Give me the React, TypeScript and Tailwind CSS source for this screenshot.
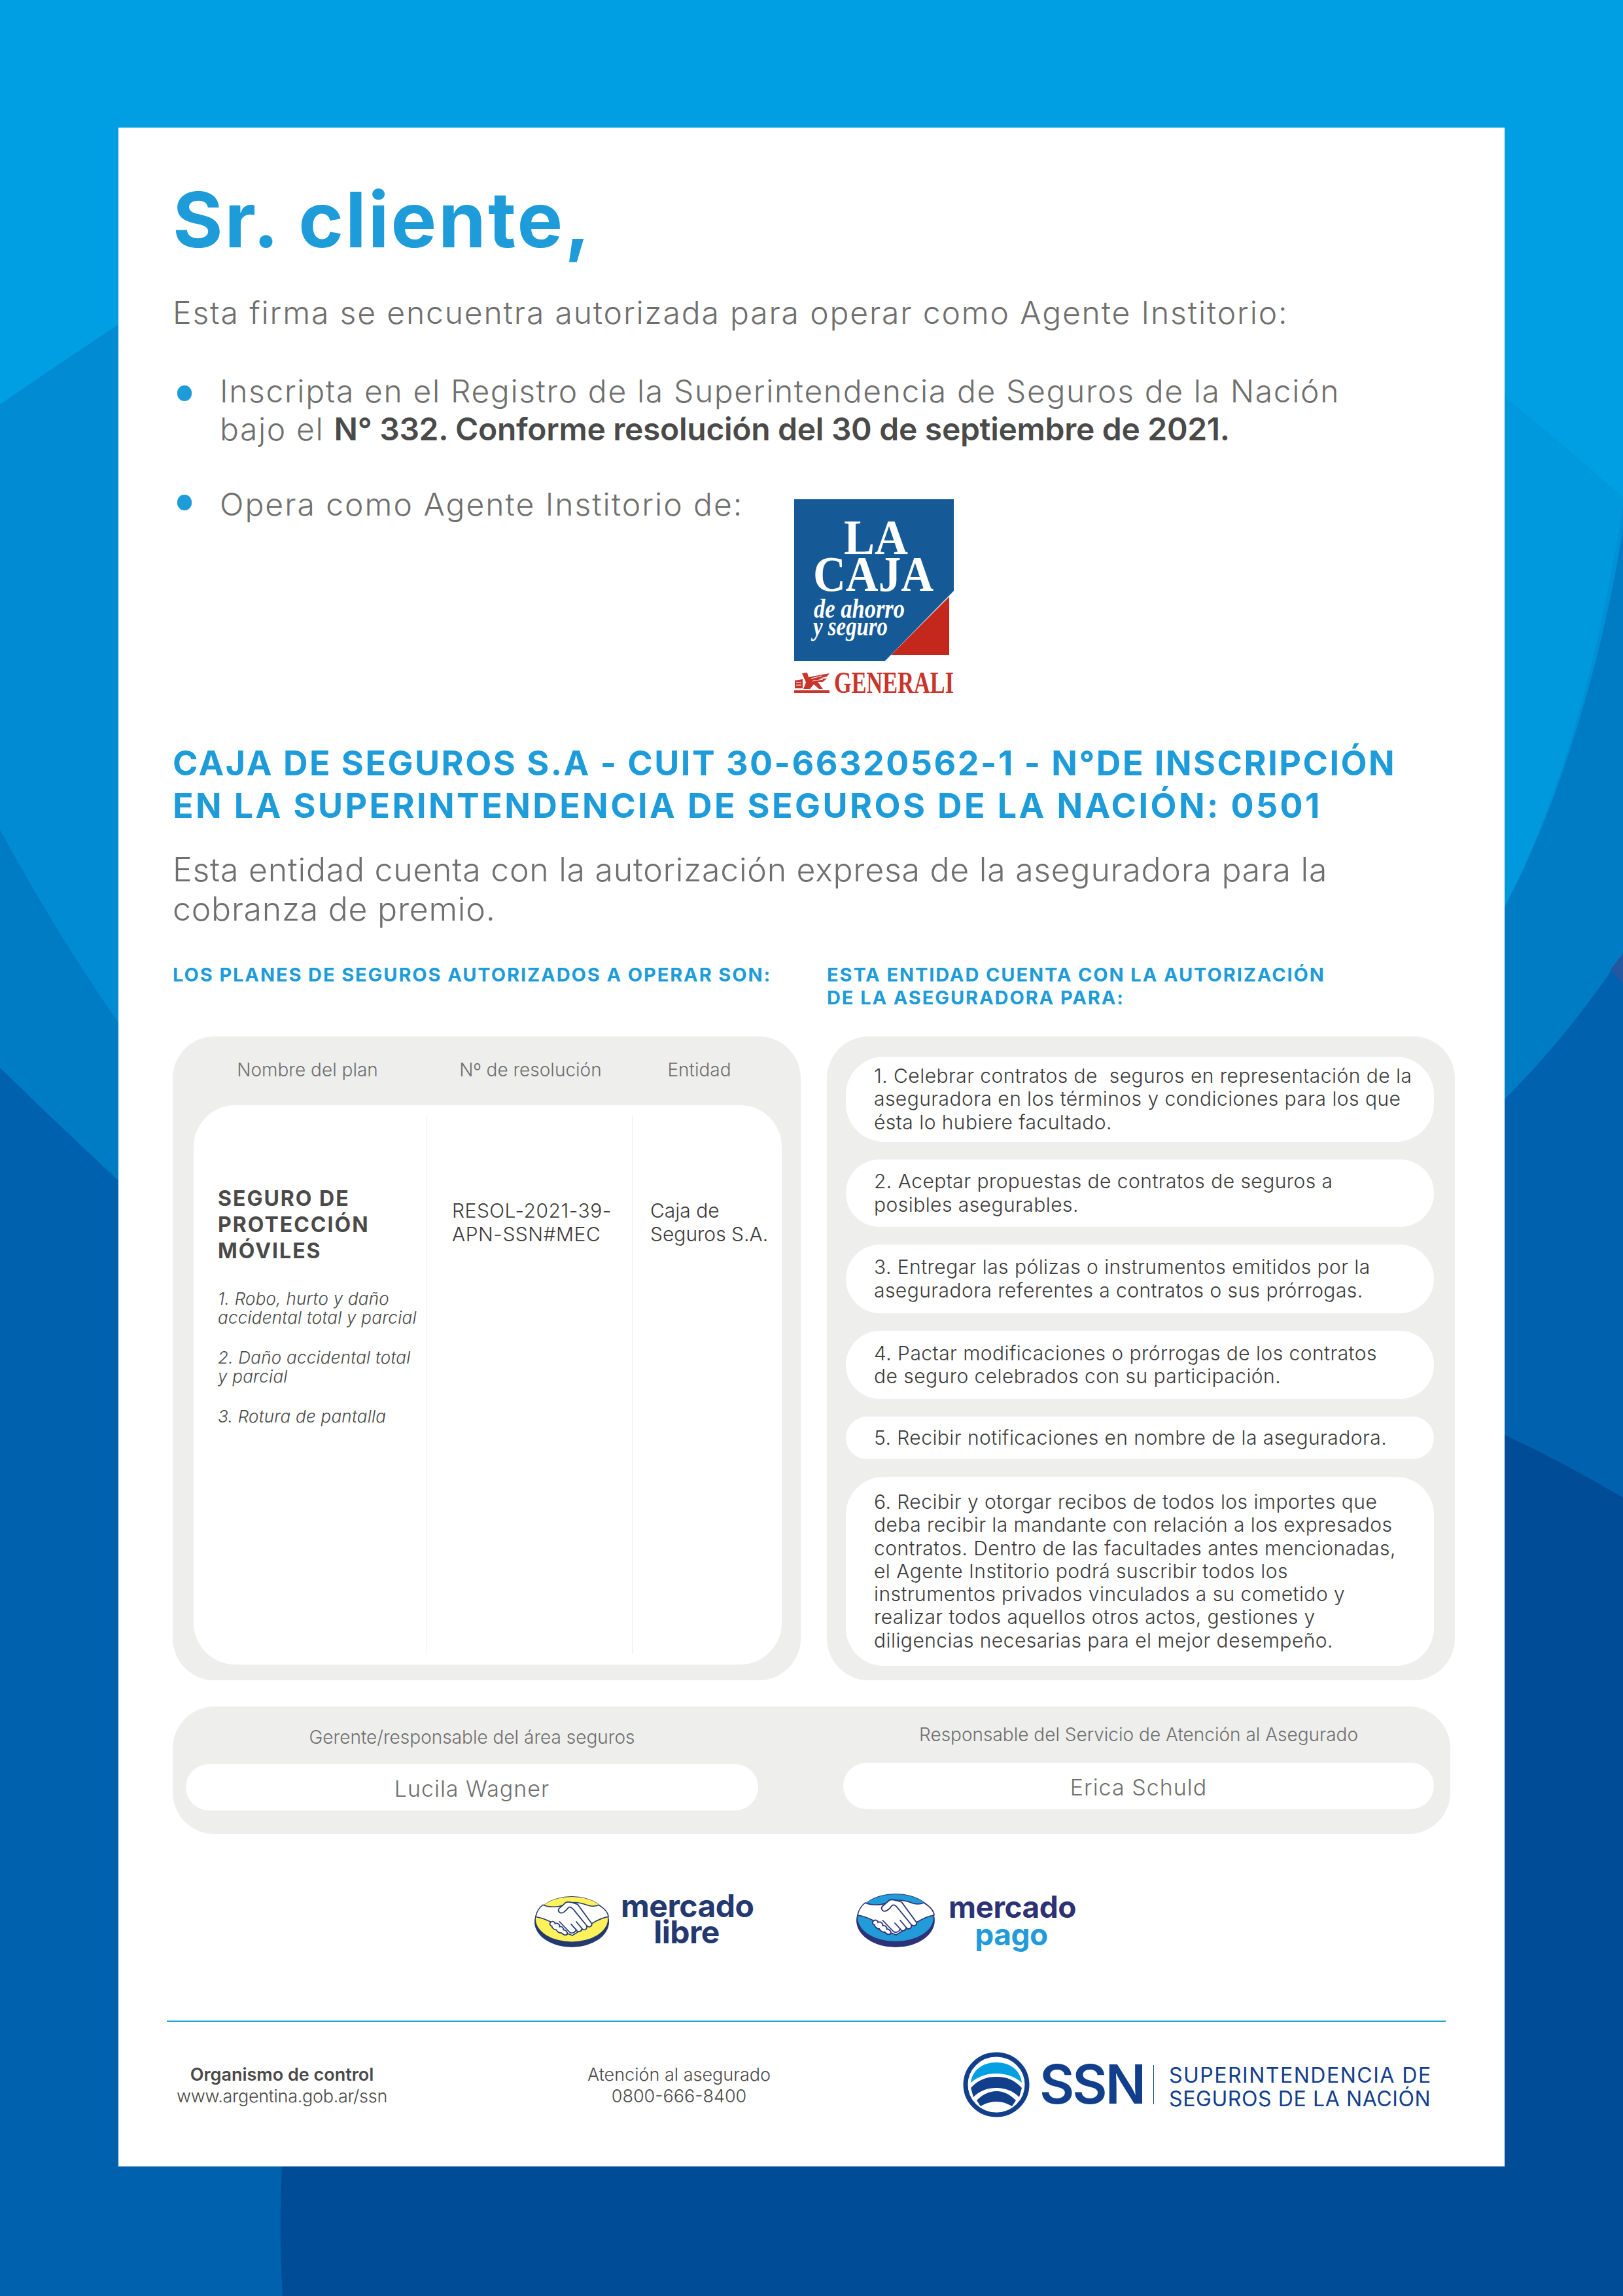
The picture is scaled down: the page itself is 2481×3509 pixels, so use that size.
function Background() {
  return (
    <svg className="absolute inset-0" width="2481" height="3509" viewBox="0 0 2481 3509">
      <rect width="2481" height="3509" fill="#009fe3" />
      {/* left strip */}
      <path d="M0 618 Q90 556 181 496 L181 1620 L0 1620 Z" fill="#008bd3" />
      <path d="M0 1268 Q85 1425 181 1563 L181 1900 L0 1900 Z" fill="#007cc4" />
      {/* right strip */}
      <path d="M2300 608 Q2390 680 2481 761 L2481 1700 L2300 1700 Z" fill="#007cc4" />
      <path d="M2300 608 Q2390 680 2481 761 L2481 806 C2460 950 2400 1200 2300 1386 Z" fill="#0090d6" />
      <path d="M2300 608 Q2390 680 2481 761 L2481 774 C2455 930 2410 1170 2300 1386 Z" fill="#0099dd" />
      <path d="M0 1632 Q90 1720 181 1804 L2300 1680 Q2400 1580 2481 1457 L2481 3509 L0 3509 Z" fill="#0061ae" />
      <path d="M2462 1482 L2481 1457 L2481 1504 Z" fill="#23579f" />
      <path d="M2300 2193 Q2390 2235 2481 2289 L2481 3509 L432 3509 Q426 3410 431 3311 L431 2900 Z" fill="#004c97" />
    </svg>
  );
}

function LaCajaLogo() {
  return (
    <svg width="244" height="310" viewBox="0 0 244 310" className="-mb-[11px]">
      <polygon points="0,0 244,0 244,140 139,247 0,247" fill="#155a96" />
      <polygon points="237,149 237,238 148,238" fill="#c4281c" />
      <g fill="#ffffff" fontFamily="'Liberation Serif',serif">
        <text x="76" y="84" fontSize="76" fontWeight="700" textLength="98" lengthAdjust="spacingAndGlyphs">LA</text>
        <text x="29" y="140" fontSize="76" fontWeight="700" textLength="184" lengthAdjust="spacingAndGlyphs">CAJA</text>
        <text x="30" y="181" fontSize="42" fontStyle="italic" fontWeight="700" textLength="139" lengthAdjust="spacingAndGlyphs">de ahorro</text>
        <text x="29" y="208" fontSize="42" fontStyle="italic" fontWeight="700" textLength="114" lengthAdjust="spacingAndGlyphs">y seguro</text>
      </g>
      {/* leone */}
      <g fill="#c8352b">
        <rect x="0" y="292" width="54" height="4" />
        <path d="M1 277 L13 275 L13 289 L1 289 Z" />
        <path d="M12 266 L20 265 L22 272 L32 270 L54 266 L50 271 L38 274 L50 274 L44 279 L36 279 L44 290 L38 290 L30 283 L24 290 L14 290 L18 280 Z" />
      </g>
      <g stroke="#ffffff" strokeWidth="1">
        <path d="M3 280 H11 M3 284 H11 M26 274 L42 270 M28 278 L44 275" />
      </g>
      <text x="61" y="296" fontSize="47" fontWeight="700" fill="#c8352b" fontFamily="'Liberation Serif',serif" textLength="183" lengthAdjust="spacingAndGlyphs">GENERALI</text>
    </svg>
  );
}

function Handshake({ color, line, w, h }: { color: string; line: string; w: number; h: number }) {
  return (
    <svg width={w} height={h} viewBox="0 0 120 84" preserveAspectRatio="none" className="shrink-0">
      <ellipse cx="59" cy="42" rx="58" ry="41" fill={line} />
      <ellipse cx="59" cy="38" rx="56" ry="36" fill={color} />
      <path d="M14 15 C25 20 40 19 52 13 C62 9 75 12 85 16 C92 18 97 17 101 15 C110 21 116 28 116 34 C108 35 98 40 90 45 L60 64 L45 58 L26 42 C18 38 10 35 3 34 C4 27 8 20 14 15 Z" fill="#ffffff" stroke={line} strokeWidth="1.6" />
      <path d="M40 27 C37 24 38 22 40 20 L50 11 C54 9 60 11 68 14 L90 45 C91 50 85 52 82 48 C84 54 78 57 75 53 C74 58 68 60 66 55 C64 60 58 62 55 58 L40 42 M40 27 C44 30 50 25 54 19 C57 17 60 20 63 24 L82 48 M75 53 L66 42 M66 55 L58 46" fill="#ffffff" stroke={line} strokeWidth="1.8" strokeLinejoin="round" strokeLinecap="round" />
      <path d="M26 43 C29 40 33 42 33 45 C37 43 41 47 40 50 C44 49 47 53 46 55 C50 55 53 59 52 62 C49 65 45 62 43 60 C39 60 36 57 35 55 C31 55 28 51 28 49 C25 48 24 45 26 43 Z" fill="#ffffff" stroke={line} strokeWidth="1.8" />
    </svg>
  );
}

function SsnMark() {
  return (
    <svg width="102" height="100" viewBox="0 0 102 100" className="shrink-0">
      <ellipse cx="51" cy="50" rx="47" ry="46" fill="#ffffff" stroke="#123f8c" strokeWidth="7" />
      <path d="M12 47 C14 28 30 16 51 16 C72 16 88 28 90 47 C78 37 66 33 51 33 C36 33 24 37 12 47 Z" fill="#00a0e3" />
      <path d="M12 55 C24 42 36 38 51 38 C66 38 78 42 90 55 L86 69 C76 59 64 55 51 55 C38 55 26 59 16 69 Z" fill="#123f8c" />
      <path d="M21 74 C30 65 40 60 51 60 C62 60 72 65 81 74 L75 83 C66 78 60 76 51 76 C42 76 36 78 27 83 Z" fill="#123f8c" />
    </svg>
  );
}

const planItems = [
  ["1. Robo, hurto y daño", "accidental total y parcial"],
  ["2. Daño accidental total", "y parcial"],
  ["3. Rotura de pantalla"],
];

const authItems = [
  { h: "h-[130px]", lines: ["1. Celebrar contratos de  seguros en representación de la", "aseguradora en los términos y condiciones para los que", "ésta lo hubiere facultado."] },
  { h: "h-[103px]", lines: ["2. Aceptar propuestas de contratos de seguros a", "posibles asegurables."] },
  { h: "h-[105px]", lines: ["3. Entregar las pólizas o instrumentos emitidos por la", "aseguradora referentes a contratos o sus prórrogas."] },
  { h: "h-[104px]", lines: ["4. Pactar modificaciones o prórrogas de los contratos", "de seguro celebrados con su participación."] },
  { h: "h-[65px]", lines: ["5. Recibir notificaciones en nombre de la aseguradora."] },
  {
    h: "h-[289px]",
    lines: [
      "6. Recibir y otorgar recibos de todos los importes que",
      "deba recibir la mandante con relación a los expresados",
      "contratos. Dentro de las facultades antes mencionadas,",
      "el Agente Institorio podrá suscribir todos los",
      "instrumentos privados vinculados a su cometido y",
      "realizar todos aquellos otros actos, gestiones y",
      "diligencias necesarias para el mejor desempeño.",
    ],
  },
];

export default function App() {
  return (
    <div className="relative w-[2481px] h-[3509px] overflow-hidden pt-[195px] pl-[181px] font-[Inter,sans-serif]">
      <Background />
      <div className="relative w-[2119px] h-[3116px] bg-white pl-[83px] pt-[81px]">
        <h1 className="text-[117px] leading-[120px] font-bold text-[#1d9cd9] tracking-[3px]">Sr. cliente,</h1>
        <p className="mt-[52px] text-[48px] leading-[60px] font-light text-[#6f6f6e] tracking-[1.86px] whitespace-nowrap">
          Esta firma se encuentra autorizada para operar como Agente Institorio:
        </p>

        <div className="mt-[61px] flex">
          <span className="mt-[20px] ml-[7px] w-[22px] h-[24px] rounded-full bg-[#1d9cd9] shrink-0" />
          <p className="ml-[43px] text-[48px] leading-[58px] font-light text-[#6f6f6e] tracking-[1.63px] whitespace-nowrap">
            Inscripta en el Registro de la Superintendencia de Seguros de la Nación
            <br />
            bajo el <b className="font-semibold text-[#4a4a49] tracking-[-0.3px]">N° 332. Conforme resolución del 30 de septiembre de 2021.</b>
          </p>
        </div>

        <div className="mt-[57px] flex items-start">
          <span className="mt-[14px] ml-[7px] w-[22px] h-[24px] rounded-full bg-[#1d9cd9] shrink-0" />
          <p className="ml-[43px] w-[878px] text-[48px] leading-[58px] font-light text-[#6f6f6e] tracking-[2px] whitespace-nowrap">
            Opera como Agente Institorio de:
          </p>
          <div className="mt-[21px]">
            <LaCajaLogo />
          </div>
        </div>

        <h2 className="mt-[72px] text-[52px] leading-[65px] font-bold text-[#1d9cd9] whitespace-nowrap">
          <span className="block tracking-[2.5px]">CAJA DE SEGUROS S.A - CUIT 30-66320562-1 - N°DE INSCRIPCIÓN</span>
          <span className="block tracking-[3.4px]">EN LA SUPERINTENDENCIA DE SEGUROS DE LA NACIÓN: 0501</span>
        </h2>
        <p className="mt-[35px] text-[50px] leading-[60px] font-light text-[#6f6f6e] tracking-[0.73px] whitespace-nowrap">
          Esta entidad cuenta con la autorización expresa de la aseguradora para la
          <br />
          cobranza de premio.
        </p>

        <div className="mt-[53px] flex gap-[40px] text-[29px] leading-[35px] font-bold text-[#1d9cd9] tracking-[1.9px] whitespace-nowrap">
          <p className="w-[960px]">LOS PLANES DE SEGUROS AUTORIZADOS A OPERAR SON:</p>
          <p>
            ESTA ENTIDAD CUENTA CON LA AUTORIZACIÓN
            <br />
            DE LA ASEGURADORA PARA:
          </p>
        </div>

        <div className="mt-[42px] flex gap-[40px]">
          <section className="w-[960px] h-[984px] rounded-[64px] bg-[#eeeeed] flex flex-col">
            <div className="h-[105px] pb-[3px] flex items-center text-[28px] font-light text-[#6f6f6e]">
              <span className="w-[412px] text-center">Nombre del plan</span>
              <span className="w-[270px] text-center">Nº de resolución</span>
              <span className="w-[246px] text-center">Entidad</span>
            </div>
            <div className="ml-[32px] w-[899px] h-[855px] rounded-[64px] bg-white flex py-[16px]">
              <div className="w-[357px] pl-[37px] pt-[107px] border-r border-[#eeeeed]">
                <p className="text-[32px] leading-[40px] font-bold text-[#4a4a49] tracking-[2px] whitespace-nowrap">
                  SEGURO DE
                  <br />
                  PROTECCIÓN
                  <br />
                  MÓVILES
                </p>
                <div className="mt-[38px] flex flex-col gap-[32px] text-[26px] leading-[29px] font-light italic text-[#4a4a49] tracking-[0.25px] whitespace-nowrap">
                  {planItems.map((lines) => (
                    <p key={lines[0]}>
                      {lines.map((l) => (
                        <span key={l} className="block">{l}</span>
                      ))}
                    </p>
                  ))}
                </div>
              </div>
              <div className="w-[314px] pl-[38px] pt-[127px] text-[30px] leading-[36px] font-light text-[#3c3c3b] tracking-[0.5px] border-r border-[#eeeeed] whitespace-nowrap">
                RESOL-2021-39-
                <br />
                APN-SSN#MEC
              </div>
              <div className="pl-[27px] pt-[127px] text-[30px] leading-[36px] font-light text-[#3c3c3b] whitespace-nowrap">
                Caja de
                <br />
                Seguros S.A.
              </div>
            </div>
          </section>

          <section className="w-[960px] h-[984px] rounded-[64px] bg-[#eeeeed] pt-[31px] pl-[29px] flex flex-col gap-[27px]">
            {authItems.map((item) => (
              <div key={item.lines[0]} className={`${item.h} w-[899px] rounded-[58px] bg-white pl-[43px] flex flex-col justify-center text-[30px] leading-[35.3px] font-light text-[#3c3c3b] tracking-[0.45px] whitespace-pre`}>
                {item.lines.map((l) => (
                  <span key={l}>{l}</span>
                ))}
              </div>
            ))}
          </section>
        </div>

        <section className="mt-[40px] w-[1953px] h-[195px] rounded-[64px] bg-[#eeeeed] pl-[20px] flex gap-[130px]">
          <div className="w-[875px] pt-[32px]">
            <p className="text-[28px] leading-[30px] font-light text-[#6f6f6e] text-center">Gerente/responsable del área seguros</p>
            <div className="mt-[26px] h-[71px] pt-[3px] rounded-full bg-white flex items-center justify-center text-[34px] font-light text-[#6f6f6e] tracking-[1px]">Lucila Wagner</div>
          </div>
          <div className="w-[903px] pt-[28px]">
            <p className="text-[28px] leading-[30px] font-light text-[#6f6f6e] text-center">Responsable del Servicio de Atención al Asegurado</p>
            <div className="mt-[28px] h-[71px] pt-[3px] rounded-full bg-white flex items-center justify-center text-[34px] font-light text-[#6f6f6e] tracking-[1px]">Erica Schuld</div>
          </div>
        </section>

        <div className="mt-[90px] h-[87px] pl-[552px] flex">
          <div className="w-[492px] flex items-start gap-[15px]">
            <div className="mt-[4px]"><Handshake color="#fff159" line="#23396f" w={118} h={80} /></div>
            <div className="w-[201px] text-center text-[48px] leading-[40px] font-bold text-[#23396f] tracking-[-0.5px]">
              <p>mercado</p>
              <p>libre</p>
            </div>
          </div>
          <div className="flex items-start gap-[18px]">
            <Handshake color="#229bd9" line="#2d3277" w={124} h={84} />
            <div className="w-[192px] text-center text-[46px] leading-[42px] font-bold text-[#2d3277] tracking-[-0.5px]">
              <p>mercado</p>
              <p className="text-[#229bd9]">pago</p>
            </div>
          </div>
        </div>

        <div className="mt-[108px] -ml-[9px] w-[1955px] h-[2px] bg-[#1fa3d9]" />

        <div className="mt-[64px] flex text-[27px] leading-[33px] text-[#4a4a49]">
          <div className="w-[334px] text-center">
            <p className="font-semibold">Organismo de control</p>
            <p className="font-light tracking-[-0.3px]">www.argentina.gob.ar/ssn</p>
          </div>
          <div className="ml-[240px] w-[400px] text-center font-light">
            <p>Atención al asegurado</p>
            <p>0800-666-8400</p>
          </div>
          <div className="ml-[234px] -mt-[18px] flex items-center">
            <SsnMark />
            <span className="ml-[15px] w-[154px] text-[82px] leading-[100px] font-semibold text-[#123f8c] tracking-[-3px]">SSN</span>
            <span className="ml-[20px] w-[1px] h-[60px] bg-[#123f8c]" />
            <p className="ml-[23px] mt-[8px] text-[32px] leading-[36px] text-[#123f8c] whitespace-nowrap">
              <span className="block tracking-[1.5px]">SUPERINTENDENCIA DE</span>
              <span className="block tracking-[0.6px]">SEGUROS DE LA NACIÓN</span>
            </p>
          </div>
        </div>
      </div>
    </div>
  );
}
